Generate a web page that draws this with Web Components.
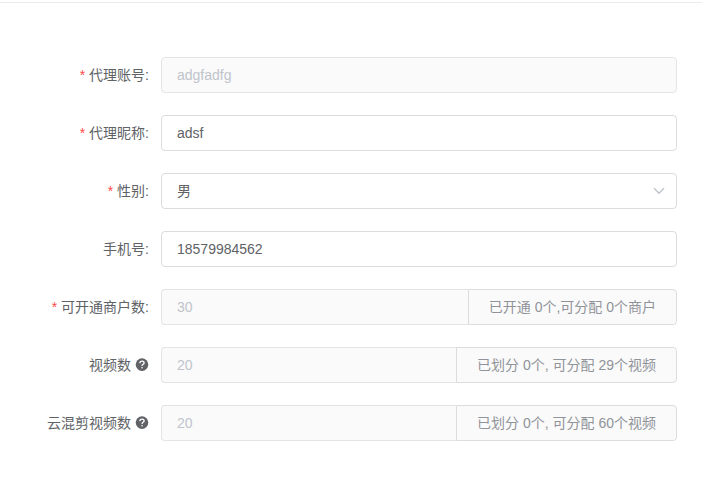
<!DOCTYPE html>
<html lang="zh-CN">
<head>
<meta charset="utf-8">
<meta name="viewport" content="width=device-width, initial-scale=1">
<title>代理账号</title>
<style>
  body {
    margin: 0;
    background: #fff;
    color: #606266;
    font: 14px/36px "Liberation Sans", "Noto Sans CJK SC", sans-serif;
  }
</style>
</head>
<body>

<agent-form>
  <form-field label="代理账号:" value="adgfadfg" required disabled></form-field>
  <form-field label="代理昵称:" value="adsf" required></form-field>
  <form-select label="性别:" options="男,女" required></form-select>
  <form-field label="手机号:" value="18579984562" type="tel"></form-field>
  <form-field label="可开通商户数:" value="30" required disabled>已开通 0个,可分配 0个商户</form-field>
  <form-field label="视频数" value="20" help disabled>已划分 0个, 可分配 29个视频</form-field>
  <form-field label="云混剪视频数" value="20" help disabled>已划分 0个, 可分配 60个视频</form-field>
</agent-form>

<script>
const rowStyles = `
  * {
    box-sizing: border-box;
  }
  :host {
    display: flex;
  }
  label {
    display: flex;
    flex: none;
    justify-content: flex-end;
    align-items: center;
    gap: 4px;
    width: 161px;
    padding-right: 12px;
    white-space: nowrap;
  }
  .star {
    color: #ff4949;
  }
  .control {
    display: flex;
    flex: 1;
    min-width: 0;
    position: relative;
  }
  input, select {
    flex: 1;
    width: 100%;
    min-width: 0;
    height: 36px;
    margin: 0;
    padding: 0 15px;
    border: 1px solid #dcdcdc;
    border-radius: 4px;
    outline: none;
    background: #fff;
    color: inherit;
    font: inherit;
    appearance: none;
  }
  select {
    line-height: 20px;
  }
  input:focus, select:focus {
    border-color: #409eff;
  }
  input:disabled {
    border-color: #e4e4e4;
    background: #fafafa;
    color: #c0c4cc;
    cursor: not-allowed;
  }
`;

const labelMarkup = (el) => `
  <label for="control">
    ${el.hasAttribute("required") ? `<span class="star">*</span>` : ""}
    <span>${el.getAttribute("label")}</span>
    ${el.hasAttribute("help") ? "<help-icon></help-icon>" : ""}
  </label>
`;

class AgentForm extends HTMLElement {
  constructor() {
    super();
    this.attachShadow({mode: "open"}).innerHTML = `
      <style>
        :host {
          display: block;
          padding-top: 2px;
        }
        form {
          display: flex;
          flex-direction: column;
          gap: 22px;
          padding: 54px 25px 44px 0;
          border-top: 1px solid #ebebeb;
        }
      </style>
      <form><slot></slot></form>
    `;
  }
}

class HelpIcon extends HTMLElement {
  constructor() {
    super();
    this.attachShadow({mode: "open"}).innerHTML = `
      <style>
        :host {
          display: flex;
        }
      </style>
      <svg width="14" height="14" viewBox="0 0 14 14" fill="none" aria-hidden="true">
        <circle cx="7" cy="6.6" r="6.3" fill="currentColor"/>
        <path d="M4.9 5.2C4.9 3.9 5.8 3.2 7 3.2S9.1 4 9.1 5C9.1 6.4 7 6.3 7 8" stroke="#fff" stroke-width="1.3"/>
        <circle cx="7" cy="9.8" r=".8" fill="#fff"/>
      </svg>
    `;
  }
}

class FormField extends HTMLElement {
  connectedCallback() {
    if (this.shadowRoot) return;
    const hasAppend = this.textContent.trim() !== "";
    this.attachShadow({mode: "open"}).innerHTML = `
      <style>
        ${rowStyles}
        .joined input {
          border-right: 0;
          border-radius: 4px 0 0 4px;
        }
        .append {
          flex: none;
          height: 36px;
          padding: 0 20px;
          border: 1px solid #dcdcdc;
          border-radius: 0 4px 4px 0;
          background: #fafafa;
          color: #909399;
          line-height: 34px;
          white-space: nowrap;
        }
      </style>
      ${labelMarkup(this)}
      <div class="control ${hasAppend ? "joined" : ""}">
        <input id="control" type="${this.getAttribute("type") || "text"}" value="${this.getAttribute("value") || ""}" ${this.hasAttribute("disabled") ? "disabled" : ""}>
        ${hasAppend ? `<div class="append"><slot></slot></div>` : ""}
      </div>
    `;
  }
}

class FormSelect extends HTMLElement {
  connectedCallback() {
    if (this.shadowRoot) return;
    const options = this.getAttribute("options").split(",");
    this.attachShadow({mode: "open"}).innerHTML = `
      <style>
        ${rowStyles}
        select {
          padding-right: 30px;
        }
        /* the arrow lies over the select */
        svg {
          position: absolute;
          top: 12px;
          right: 12px;
          pointer-events: none;
        }
      </style>
      ${labelMarkup(this)}
      <div class="control">
        <select id="control">
          ${options.map((text) => `<option>${text}</option>`).join("")}
        </select>
        <svg width="12" height="12" viewBox="0 0 12 12" fill="none" stroke="#c0c4cc" stroke-width="1.4" aria-hidden="true">
          <path d="M1 3.3L6 8.2L11 3.3"/>
        </svg>
      </div>
    `;
  }
}

customElements.define("help-icon", HelpIcon);
customElements.define("agent-form", AgentForm);
customElements.define("form-field", FormField);
customElements.define("form-select", FormSelect);
</script>
</body>
</html>
